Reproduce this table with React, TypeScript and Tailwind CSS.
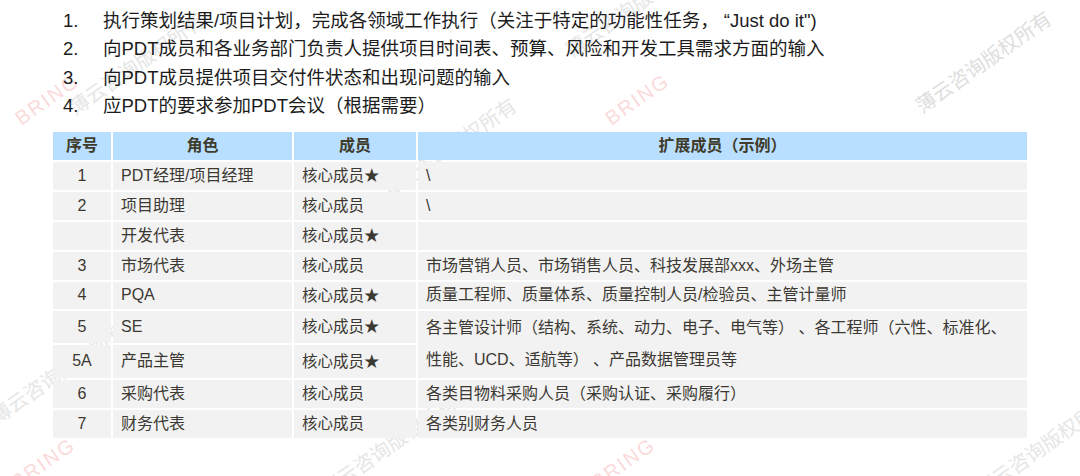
import React from "react";

const points = [
  "执行策划结果/项目计划，完成各领域工作执行（关注于特定的功能性任务， “Just do it\")",
  "向PDT成员和各业务部门负责人提供项目时间表、预算、风险和开发工具需求方面的输入",
  "向PDT成员提供项目交付件状态和出现问题的输入",
  "应PDT的要求参加PDT会议（根据需要）",
];

type Row = { no: string; role: string; member: string; ext?: React.ReactNode; span?: boolean };

const rows: Row[] = [
  { no: "1", role: "PDT经理/项目经理", member: "核心成员★", ext: "\\" },
  { no: "2", role: "项目助理", member: "核心成员", ext: "\\" },
  { no: "", role: "开发代表", member: "核心成员★", ext: "" },
  { no: "3", role: "市场代表", member: "核心成员", ext: "市场营销人员、市场销售人员、科技发展部xxx、外场主管" },
  { no: "4", role: "PQA", member: "核心成员★", ext: "质量工程师、质量体系、质量控制人员/检验员、主管计量师" },
  {
    no: "5",
    role: "SE",
    member: "核心成员★",
    span: true,
    ext: (
      <>
        各主管设计师（结构、系统、动力、电子、电气等） 、各工程师（六性、标准化、
        <br />
        性能、UCD、适航等） 、产品数据管理员等
      </>
    ),
  },
  { no: "5A", role: "产品主管", member: "核心成员★" },
  { no: "6", role: "采购代表", member: "核心成员", ext: "各类目物料采购人员（采购认证、采购履行）" },
  { no: "7", role: "财务代表", member: "核心成员", ext: "各类别财务人员" },
];

// faint watermark layer, each placed by the lower-left corner of its text
const marks = [
  { text: "薄云咨询版权所有", cls: "left-[78px] top-[96px] text-[#e6e6e6]" },
  { text: "薄云咨询版权所有", cls: "left-[575px] top-[38px] text-[#e6e6e6]" },
  { text: "薄云咨询版权所有", cls: "left-[925px] top-[94px] text-[#dedede]" },
  { text: "薄云咨询版权所有", cls: "left-[390px] top-[181px] text-[#e6e6e6]" },
  { text: "薄云咨询版权所有", cls: "left-[0px] top-[405px] text-[#e6e6e6]" },
  { text: "薄云咨询版权所有", cls: "left-[330px] top-[478px] text-[#e6e6e6]" },
  { text: "薄云咨询版权所有", cls: "left-[985px] top-[478px] text-[#e6e6e6]" },
  { text: "BRING", cls: "left-[24px] top-[106px] text-[#fadada] text-[13px] tracking-[2px]" },
  { text: "BRING", cls: "left-[614px] top-[106px] text-[#fadada] text-[13px] tracking-[2px]" },
  { text: "BRING", cls: "left-[20px] top-[470px] text-[#fadada] text-[13px] tracking-[2px]" },
  { text: "BRING", cls: "left-[600px] top-[470px] text-[#fadada] text-[13px] tracking-[2px]" },
];

const font = "font-['Liberation_Sans','Noto_Sans_CJK_SC',sans-serif]";

export default function App() {
  return (
    <div className={`relative w-[1080px] h-[476px] overflow-hidden bg-white ${font}`}>
      <div className="absolute inset-0 z-0">
        {marks.map((m, i) => (
          <span
            key={i}
            className={`absolute h-[24px] leading-[24px] text-[20px] whitespace-nowrap origin-bottom-left -rotate-[35deg] ${m.cls}`}
          >
            {m.text}
          </span>
        ))}
      </div>

      <div className="relative z-10">
        <ol className="pt-[7px] pl-[63px] text-[18.5px] leading-[28.4px] text-[#1c1c1c]">
          {points.map((p, i) => (
            <li key={i} className="flex">
              <span className="w-[40px] shrink-0">{i + 1}.</span>
              <span className="whitespace-pre">{p}</span>
            </li>
          ))}
        </ol>

        <div className="mt-[11px] ml-[53px] w-[974px] grid grid-cols-[58px_179px_122px_609px] grid-rows-[28px_28px_28px_28px_28px_27px_32px_33px_28px_28px] gap-[2px] text-[#3c3933]">
          <div className="bg-[#b8dfff] flex items-center justify-center text-[16px] font-bold text-[#3f3c2c]">序号</div>
          <div className="bg-[#b8dfff] flex items-center justify-center text-[16px] font-bold text-[#3f3c2c]">角色</div>
          <div className="bg-[#b8dfff] flex items-center justify-center text-[16px] font-bold text-[#3f3c2c]">成员</div>
          <div className="bg-[#b8dfff] flex items-center justify-center text-[16px] font-bold text-[#3f3c2c]">扩展成员（示例）</div>

          {rows.map((r, i) => (
            <React.Fragment key={i}>
              <div className="bg-[#f2f2f2] flex items-center justify-center text-[16px]">{r.no}</div>
              <div className="bg-[#f2f2f2] flex items-center pl-[8px] text-[16px]">{r.role}</div>
              <div className="bg-[#f2f2f2] flex items-center pl-[8px] text-[15.5px]">{r.member}</div>
              {r.ext !== undefined && (
                <div
                  className={
                    r.span
                      ? "row-span-2 bg-[#f2f2f2] flex items-center pl-[8px] text-[16px] leading-[32px] whitespace-pre"
                      : "bg-[#f2f2f2] flex items-center pl-[8px] text-[16px]"
                  }
                >
                  <div>{r.ext}</div>
                </div>
              )}
            </React.Fragment>
          ))}
        </div>
      </div>
    </div>
  );
}
